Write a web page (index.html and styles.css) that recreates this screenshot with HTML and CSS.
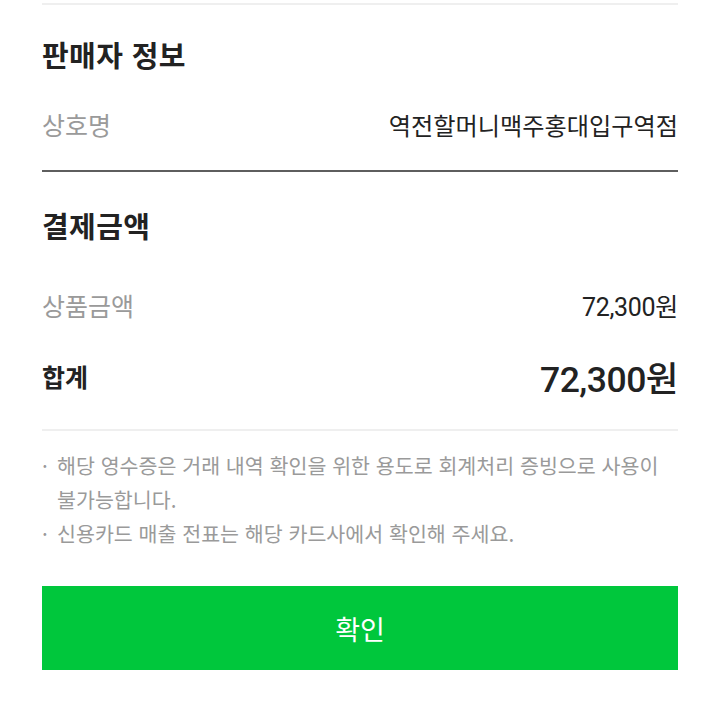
FILE: index.html
```html
<!DOCTYPE html>
<html lang="ko">
<head>
<meta charset="utf-8">
<link rel="stylesheet" href="styles.css">
</head>
<body>
<div class="page">
  <div class="divider light top"></div>
  <h2 class="section-title first">판매자 정보</h2>
  <div class="row">
    <span class="label">상호명</span>
    <span class="value">역전할머니맥주홍대입구역점</span>
  </div>
  <div class="divider dark"></div>
  <h2 class="section-title second">결제금액</h2>
  <div class="row price">
    <span class="label">상품금액</span>
    <span class="amount">72,300원</span>
  </div>
  <div class="row total">
    <span class="total-label">합계</span>
    <span class="total-amount">72,300원</span>
  </div>
  <div class="divider light bottom"></div>
  <ul class="notes">
    <li>해당 영수증은 거래 내역 확인을 위한 용도로 회계처리 증빙으로 사용이 불가능합니다.</li>
    <li>신용카드 매출 전표는 해당 카드사에서 확인해 주세요.</li>
  </ul>
  <button class="confirm">확인</button>
</div>
</body>
</html>
```

FILE: styles.css
```css
html, body {
  margin: 0;
  padding: 0;
  background: #fff;
}
body {
  font-family: "Noto Sans CJK KR", "Noto Sans", sans-serif;
  color: #222;
}
.page {
  padding: 3px 42px 0 42px;
  display: flex;
  flex-direction: column;
}
.divider {
  height: 2px;
}
.divider.light {
  background: #efefef;
}
.divider.dark {
  background: #5e5e5e;
  margin-top: 11px;
}
.divider.bottom {
  margin-top: 18px;
}
.section-title {
  margin: 0;
  height: 70px;
  display: flex;
  align-items: center;
  font-size: 29px;
  font-weight: 700;
  letter-spacing: 0.4px;
  color: #222;
}
.section-title.first {
  margin-top: 14px;
}
.section-title.second {
  margin-top: 18px;
}
.row {
  height: 70px;
  display: flex;
  align-items: center;
  justify-content: space-between;
}
.row.price {
  margin-top: 10px;
}
.row.total {
  margin-top: 1px;
}
.label {
  font-size: 25px;
  color: #9a9a9a;
}
.value {
  font-size: 24.2px;
  color: #222;
}
.amount {
  font-family: Roboto, "Noto Sans CJK KR", sans-serif;
  font-size: 25px;
  color: #222;
  letter-spacing: -0.3px;
}
.total-label {
  font-size: 25px;
  font-weight: 700;
}
.total-amount {
  font-family: Roboto, "Noto Sans CJK KR", sans-serif;
  font-size: 35.5px;
  font-weight: 500;
  letter-spacing: -0.5px;
}
.notes {
  list-style: none;
  margin: 17px 0 0 0;
  padding: 0;
}
.notes li {
  position: relative;
  padding-left: 15px;
  font-size: 20.6px;
  line-height: 34px;
  color: #9a9a9a;
}
.notes li::before {
  content: "·";
  position: absolute;
  left: 0;
  top: 0;
}
.confirm {
  margin-top: 36px;
  height: 84px;
  border: none;
  background: #00c73c;
  color: #fff;
  font-family: inherit;
  font-size: 27px;
  padding: 0;
}
```
